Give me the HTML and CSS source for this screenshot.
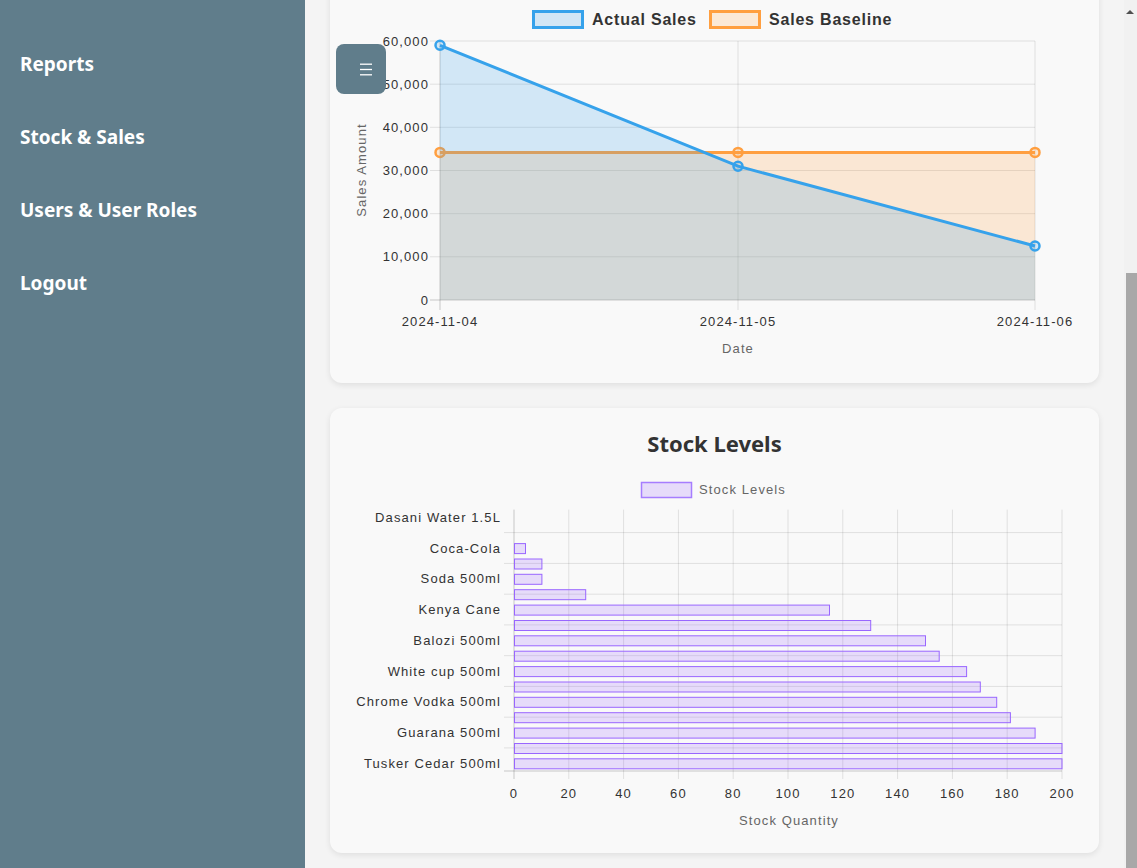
FILE: index.html
```html
<!DOCTYPE html>
<html lang="en">
<head>
<meta charset="utf-8">
<title>Reports</title>
<link rel="stylesheet" href="styles.css">
</head>
<body>
<div class="layout">
  <nav class="sidebar">
    <ul class="nav">
      <li><a href="#">Reports</a></li>
      <li><a href="#">Stock &amp; Sales</a></li>
      <li><a href="#">Users &amp; User Roles</a></li>
      <li><a href="#">Logout</a></li>
    </ul>
  </nav>
  <main class="main">
    <header class="page-head">
      <h1 class="page-title">Reports</h1>
    </header>

    <section class="card">
      <h2 class="card-title">Sales Over Time</h2>
      <svg class="chart line-chart" viewBox="350 0 729 363" preserveAspectRatio="xMinYMin meet">
        <rect x="533.5" y="11.5" width="49" height="16" fill="#d2e6f5" stroke="#36a2eb" stroke-width="3"/>
        <text class="legend-bold" x="592" y="25">Actual Sales</text>
        <rect x="710.5" y="11.5" width="49" height="16" fill="#fbe9d7" stroke="#ff9f40" stroke-width="3"/>
        <text class="legend-bold" x="769" y="25">Sales Baseline</text>
        <g class="grid">
          <line x1="430" y1="41" x2="1035" y2="41"/>
          <line x1="430" y1="84.2" x2="1035" y2="84.2"/>
          <line x1="430" y1="127.3" x2="1035" y2="127.3"/>
          <line x1="430" y1="170.5" x2="1035" y2="170.5"/>
          <line x1="430" y1="213.7" x2="1035" y2="213.7"/>
          <line x1="430" y1="256.8" x2="1035" y2="256.8"/>
          <line x1="738" y1="41" x2="738" y2="310"/>
          <line x1="1035" y1="41" x2="1035" y2="310"/>
        </g>
        <g class="axis">
          <line x1="430" y1="300" x2="1035" y2="300"/>
          <line x1="440" y1="41" x2="440" y2="310"/>
        </g>
        <polygon points="440,152.4 1035,152.4 1035,300 440,300" fill="rgba(255,159,64,0.2)"/>
        <polyline points="440,152.4 1035,152.4" fill="none" stroke="#ff9f40" stroke-width="3"/>
        <g fill="rgba(255,159,64,0.2)" stroke="#ff9f40" stroke-width="2.5">
          <circle cx="440" cy="152.4" r="4.5"/>
          <circle cx="738" cy="152.4" r="4.5"/>
          <circle cx="1035" cy="152.4" r="4.5"/>
        </g>
        <polygon points="440,45.3 738,166.2 1035,246 1035,300 440,300" fill="rgba(54,162,235,0.2)"/>
        <polyline points="440,45.3 738,166.2 1035,246" fill="none" stroke="#36a2eb" stroke-width="3"/>
        <g fill="rgba(54,162,235,0.2)" stroke="#36a2eb" stroke-width="2.5">
          <circle cx="440" cy="45.3" r="4.5"/>
          <circle cx="738" cy="166.2" r="4.5"/>
          <circle cx="1035" cy="246" r="4.5"/>
        </g>
        <g class="tick tick-end">
          <text x="429" y="45.5">60,000</text>
          <text x="429" y="88.7">50,000</text>
          <text x="429" y="131.8">40,000</text>
          <text x="429" y="175">30,000</text>
          <text x="429" y="218.2">20,000</text>
          <text x="429" y="261.3">10,000</text>
          <text x="429" y="304.5">0</text>
        </g>
        <g class="tick tick-mid">
          <text x="440" y="326">2024-11-04</text>
          <text x="738" y="326">2024-11-05</text>
          <text x="1035" y="326">2024-11-06</text>
        </g>
        <text class="axis-title" x="738" y="353" text-anchor="middle">Date</text>
        <text class="axis-title" x="366" y="170" text-anchor="middle" transform="rotate(-90 366 170)">Sales Amount</text>
      </svg>
    </section>

    <section class="card">
      <h2 class="card-title">Stock Levels</h2>
      <svg class="chart bar-chart" viewBox="350 458 729 375" preserveAspectRatio="xMinYMin meet">
        <rect x="641.5" y="482.5" width="50" height="15" fill="rgba(153,102,255,0.2)" stroke="#a67dff" stroke-width="1.5"/>
        <text class="legend-text" x="699" y="494">Stock Levels</text>
        <g class="grid">
          <line x1="568.8" y1="509.6" x2="568.8" y2="779"/>
          <line x1="623.6" y1="509.6" x2="623.6" y2="779"/>
          <line x1="678.4" y1="509.6" x2="678.4" y2="779"/>
          <line x1="733.2" y1="509.6" x2="733.2" y2="779"/>
          <line x1="788" y1="509.6" x2="788" y2="779"/>
          <line x1="842.8" y1="509.6" x2="842.8" y2="779"/>
          <line x1="897.6" y1="509.6" x2="897.6" y2="779"/>
          <line x1="952.4" y1="509.6" x2="952.4" y2="779"/>
          <line x1="1007.2" y1="509.6" x2="1007.2" y2="779"/>
          <line x1="1062" y1="509.6" x2="1062" y2="779"/>
          <line x1="504" y1="532.6" x2="1062" y2="532.6"/>
          <line x1="504" y1="563.4" x2="1062" y2="563.4"/>
          <line x1="504" y1="594.2" x2="1062" y2="594.2"/>
          <line x1="504" y1="624.9" x2="1062" y2="624.9"/>
          <line x1="504" y1="655.7" x2="1062" y2="655.7"/>
          <line x1="504" y1="686.4" x2="1062" y2="686.4"/>
          <line x1="504" y1="717.2" x2="1062" y2="717.2"/>
          <line x1="504" y1="747.9" x2="1062" y2="747.9"/>
        </g>
        <g class="axis">
          <line x1="504" y1="771" x2="1062" y2="771"/>
          <line x1="514" y1="509.6" x2="514" y2="779"/>
        </g>
        <g class="bars">
          <rect x="514.5" y="543.6" width="11" height="10"/>
          <rect x="514.5" y="559" width="27.4" height="10"/>
          <rect x="514.5" y="574.3" width="27.4" height="10"/>
          <rect x="514.5" y="589.7" width="71.2" height="10"/>
          <rect x="514.5" y="605.1" width="315" height="10"/>
          <rect x="514.5" y="620.5" width="356.2" height="10"/>
          <rect x="514.5" y="635.8" width="411" height="10"/>
          <rect x="514.5" y="651.2" width="424.7" height="10"/>
          <rect x="514.5" y="666.6" width="452.1" height="10"/>
          <rect x="514.5" y="682" width="465.8" height="10"/>
          <rect x="514.5" y="697.3" width="482.2" height="10"/>
          <rect x="514.5" y="712.7" width="495.9" height="10"/>
          <rect x="514.5" y="728.1" width="520.6" height="10"/>
          <rect x="514.5" y="743.5" width="547.5" height="10"/>
          <rect x="514.5" y="758.8" width="547.5" height="10"/>
        </g>
        <g class="tick tick-end">
          <text x="501" y="521.8">Dasani Water 1.5L</text>
          <text x="501" y="552.6">Coca-Cola</text>
          <text x="501" y="583.3">Soda 500ml</text>
          <text x="501" y="614.1">Kenya Cane</text>
          <text x="501" y="644.8">Balozi 500ml</text>
          <text x="501" y="675.6">White cup 500ml</text>
          <text x="501" y="706.3">Chrome Vodka 500ml</text>
          <text x="501" y="737.1">Guarana 500ml</text>
          <text x="501" y="767.8">Tusker Cedar 500ml</text>
        </g>
        <g class="tick tick-mid">
          <text x="514" y="797.5">0</text>
          <text x="568.8" y="797.5">20</text>
          <text x="623.6" y="797.5">40</text>
          <text x="678.4" y="797.5">60</text>
          <text x="733.2" y="797.5">80</text>
          <text x="788" y="797.5">100</text>
          <text x="842.8" y="797.5">120</text>
          <text x="897.6" y="797.5">140</text>
          <text x="952.4" y="797.5">160</text>
          <text x="1007.2" y="797.5">180</text>
          <text x="1062" y="797.5">200</text>
        </g>
        <text class="axis-title" x="789" y="824.5" text-anchor="middle">Stock Quantity</text>
      </svg>
    </section>
  </main>
  <div class="scrollbar" aria-hidden="true">
    <div class="scroll-arrow"></div>
    <div class="scroll-thumb"></div>
  </div>
</div>
<button class="menu-toggle" type="button" aria-label="Toggle menu">
  <svg width="14" height="13" viewBox="0 0 14 13"><g stroke="#fff" stroke-width="1.3"><line x1="1" y1="1.2" x2="13" y2="1.2"/><line x1="1" y1="6.5" x2="13" y2="6.5"/><line x1="1" y1="11.8" x2="13" y2="11.8"/></g></svg>
</button>
</body>
</html>
```

FILE: styles.css
```css
* { box-sizing: border-box; }
html, body { margin: 0; height: 100%; }
body {
  font-family: "Noto Sans", "Open Sans", sans-serif;
  background: #f4f4f4;
  color: #333;
  overflow: hidden;
}
.layout { display: flex; height: 100vh; }
.sidebar {
  flex: none;
  width: 305px;
  background: #607d8b;
  padding-top: 28px;
}
.nav { list-style: none; margin: 0; padding: 0; }
.nav a {
  display: block;
  padding: 25px 20px;
  color: #fff;
  font-size: 19px;
  line-height: 23px;
  font-weight: 700;
  text-decoration: none;
}
.main {
  flex: 1;
  min-width: 0;
  overflow: hidden;
  display: flex;
  flex-direction: column;
  justify-content: flex-end;
  padding: 20px 25px 15px;
}
.main > * { flex: none; }
.page-head { margin-bottom: 25px; }
.page-title { margin: 0; font-size: 28px; line-height: 40px; }
.card {
  background: #f9f9f9;
  border-radius: 12px;
  box-shadow: 0 2px 6px rgba(0,0,0,0.09);
  padding: 20px;
  margin-bottom: 25px;
}
.card:last-child { margin-bottom: 0; }
.card-title {
  margin: 0;
  font-size: 22px;
  line-height: 30px;
  font-weight: 700;
  text-align: center;
  color: #333;
}
.chart { display: block; width: 729px; max-width: 100%; }
.line-chart { height: 363px; }
.bar-chart { height: 375px; }
.grid line { stroke: rgba(0,0,0,0.1); stroke-width: 1; }
.axis line { stroke: rgba(0,0,0,0.2); stroke-width: 1; }
.bars rect { fill: rgba(153,102,255,0.2); stroke: #9966ff; stroke-width: 1; }
.tick text {
  font-family: "Liberation Sans", Arial, sans-serif;
  font-size: 13px;
  letter-spacing: 1.1px;
  fill: #333;
}
.tick-end text { text-anchor: end; }
.tick-mid text { text-anchor: middle; }
.axis-title {
  font-family: "Liberation Sans", Arial, sans-serif;
  font-size: 13px;
  letter-spacing: 1.1px;
  fill: #666;
}
.legend-bold {
  font-family: "Liberation Sans", Arial, sans-serif;
  font-size: 16px;
  font-weight: 700;
  letter-spacing: 0.8px;
  fill: #333;
}
.legend-text {
  font-family: "Liberation Sans", Arial, sans-serif;
  font-size: 13px;
  letter-spacing: 1.1px;
  fill: #666;
}
.scrollbar {
  flex: none;
  width: 13px;
  background: #f1f1f1;
  display: flex;
  flex-direction: column;
  align-items: flex-end;
}
.scroll-arrow {
  width: 0;
  height: 0;
  margin: 10px 3px 0 0;
  border-left: 4px solid transparent;
  border-right: 4px solid transparent;
  border-bottom: 4px solid #505050;
}
.scroll-thumb {
  margin-top: 259px;
  width: 11px;
  flex: 1;
  background: #a8a8a8;
}
.menu-toggle {
  position: fixed;
  left: 336px;
  top: 44px;
  width: 50px;
  height: 50px;
  border: 0;
  border-radius: 8px;
  background: #607d8b;
  display: flex;
  align-items: center;
  justify-content: center;
  padding: 0 0 0 10px;
  cursor: pointer;
}
.menu-toggle svg { display: block; }
```
